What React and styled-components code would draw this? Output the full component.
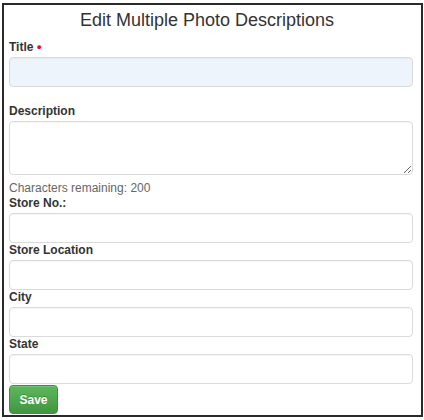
import styled, { createGlobalStyle } from "styled-components";

const GlobalStyle = createGlobalStyle`
    html, body {
        margin: 0;
        padding: 0;
        background: #ffffff;
    }
    body {
        font-family: "Liberation Sans", Arial, sans-serif;
        color: #333333;
    }
`;

const Frame = styled.div`
    box-sizing: border-box;
    width: 421px;
    height: 414px;
    margin: 3px 0 0 2px;
    border: 2px solid #2a2a2a;
    padding: 5px 8px 0 5px;
    background: #ffffff;
`;

const Heading = styled.h1`
    margin: 0 8px 0 0;
    font-size: 18px;
    line-height: 20px;
    font-weight: normal;
    text-align: center;
    color: #333333;
`;

const Form = styled.form`
    display: flex;
    flex-direction: column;
    margin-top: 10px;
`;

const Group = styled.div`
    display: flex;
    flex-direction: column;
    margin-bottom: ${(p) => p.$gap || 0}px;
`;

const Label = styled.label`
    font-size: 12px;
    line-height: 15px;
    font-weight: bold;
    color: #333333;
    margin-bottom: 2px;
`;

const Required = styled.span`
    color: #d9141b;
    font-size: 9px;
    margin-left: 3px;
    vertical-align: 1px;
`;

const Input = styled.input`
    box-sizing: border-box;
    width: 404px;
    height: 30px;
    border: 1px solid #dadada;
    border-radius: 4px;
    background: ${(p) => (p.$filled ? "#edf4fc" : "#ffffff")};
    box-shadow: inset 0 1px 1px rgba(0, 0, 0, 0.04);
    padding: 4px 8px;
    font-family: inherit;
    font-size: 12px;
    outline: none;
`;

const TextArea = styled.textarea`
    box-sizing: border-box;
    width: 404px;
    height: 54px;
    border: 1px solid #dadada;
    border-radius: 4px;
    background: #ffffff;
    box-shadow: inset 0 1px 1px rgba(0, 0, 0, 0.04);
    padding: 4px 8px;
    font-family: inherit;
    font-size: 12px;
    outline: none;
    display: block;
`;

const Hint = styled.div`
    font-size: 12px;
    line-height: 13px;
    color: #666666;
    margin: 7px 0 1px;
`;

const SaveButton = styled.button`
    align-self: flex-start;
    box-sizing: border-box;
    width: 49px;
    height: 29px;
    margin-top: 1px;
    padding: 0;
    border: 1px solid #3e8f3e;
    border-radius: 4px;
    background: linear-gradient(to bottom, #5cb85c 0%, #419641 100%);
    color: #ffffff;
    font-family: inherit;
    font-size: 12px;
    font-weight: bold;
    text-shadow: 0 -1px 0 rgba(0, 0, 0, 0.2);
    box-shadow: inset 0 1px 0 rgba(255, 255, 255, 0.15);
    cursor: pointer;
`;

const fields = ["Store No.:", "Store Location", "City", "State"];

const App = () => {
    return (
        <>
            <GlobalStyle />
            <Frame>
                <Heading>Edit Multiple Photo Descriptions</Heading>
                <Form onSubmit={(e) => e.preventDefault()}>
                    <Group $gap={17}>
                        <Label>
                            Title<Required>●</Required>
                        </Label>
                        <Input $filled type="text" />
                    </Group>
                    <Group>
                        <Label>Description</Label>
                        <TextArea />
                        <Hint>Characters remaining: 200</Hint>
                    </Group>
                    {fields.map((name) => (
                        <Group key={name}>
                            <Label>{name}</Label>
                            <Input type="text" />
                        </Group>
                    ))}
                    <SaveButton type="submit">Save</SaveButton>
                </Form>
            </Frame>
        </>
    );
};

export default App;
